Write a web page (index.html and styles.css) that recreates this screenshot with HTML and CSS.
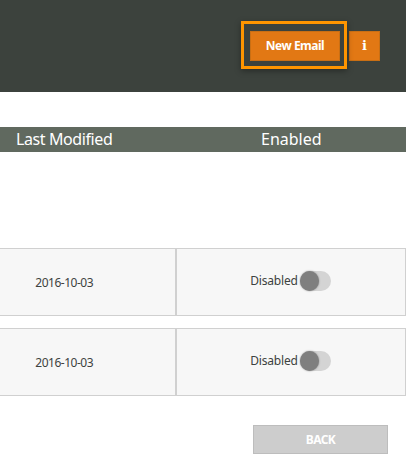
FILE: index.html
```html
<!DOCTYPE html>
<html lang="en">
<head>
<meta charset="utf-8">
<title>Emails</title>
<link rel="stylesheet" href="styles.css">
</head>
<body>
<header class="topbar">
  <button class="btn btn-new" type="button">New Email<span class="highlight"></span></button>
  <button class="btn btn-info" type="button">i</button>
</header>
<div class="table-head">
  <div class="col-date">Last Modified</div>
  <div class="col-enabled">Enabled</div>
</div>
<div class="rows">
  <div class="row">
    <div class="cell cell-date">2016-10-03</div>
    <div class="cell cell-state"><span class="state-label">Disabled</span><span class="toggle"><span class="knob"></span></span></div>
  </div>
  <div class="row">
    <div class="cell cell-date">2016-10-03</div>
    <div class="cell cell-state"><span class="state-label">Disabled</span><span class="toggle"><span class="knob"></span></span></div>
  </div>
</div>
<div class="footer">
  <button class="btn-back" type="button">BACK</button>
</div>
</body>
</html>
```
FILE: styles.css
```css
* { box-sizing: border-box; }
html, body { margin: 0; padding: 0; }
body {
  width: 406px;
  height: 468px;
  overflow: hidden;
  background: #fff;
  font-family: "Noto Sans", "Open Sans", sans-serif;
  color: #3d4240;
}
.topbar {
  height: 92px;
  background: #3c423d;
  display: flex;
  justify-content: flex-end;
  align-items: flex-start;
  gap: 9px;
  padding: 31px 26px 0 0;
}
.btn {
  height: 30px;
  border: 1px solid #c96f14;
  background: #e27814;
  color: #fff;
  font: 700 12px "Noto Sans", sans-serif;
  letter-spacing: -0.5px;
  padding: 0 0 2px;
}
.btn-new { width: 90px; position: relative; }
.btn-info { width: 31px; font: 700 13px "DejaVu Serif", serif; padding: 0 0 1px; letter-spacing: 0; }
.highlight {
  position: absolute;
  left: -10px;
  top: -11px;
  width: 106px;
  height: 48px;
  border: 3px solid #ff9500;
  box-shadow: 0 2px 6px rgba(0, 0, 0, 0.35);
}
.table-head {
  margin-top: 35px;
  height: 25px;
  background: #60695f;
  color: #fff;
  font-size: 16px;
  line-height: 25px;
  display: flex;
}
.col-date { width: 177px; padding-left: 16px; letter-spacing: -0.4px; }
.col-enabled { flex: 1; padding-left: 84px; }
.rows {
  margin-top: 96px;
  display: flex;
  flex-direction: column;
  gap: 12px;
}
.row {
  height: 68px;
  display: flex;
  width: 406px;
  border: 1px solid #d0d0d0;
  border-left: 0;
  background: #f7f7f7;
  font-size: 12px;
}
.cell { display: flex; align-items: center; justify-content: center; }
.cell-date { width: 175px; justify-content: flex-end; padding-right: 82px; letter-spacing: -0.5px; }
.cell-state { flex: 1; border-left: 2px solid #d0d0d0; gap: 2px; padding: 0 1px 2px 0; }
.state-label { margin-top: -2px; letter-spacing: -0.2px; }
.toggle {
  width: 31px;
  height: 20px;
  border-radius: 10px;
  background: #d4d4d4;
  position: relative;
  display: block;
}
.knob {
  position: absolute;
  left: 0;
  top: 0;
  width: 19px;
  height: 20px;
  border-radius: 50%;
  background: #7f7f7f;
  box-shadow: 0 0 2px rgba(0, 0, 0, 0.4);
}
.footer {
  display: flex;
  justify-content: flex-end;
  padding: 29px 18px 0 0;
}
.btn-back {
  width: 135px;
  height: 29px;
  background: #cdcdcd;
  border: 1px solid #bdbdbd;
  color: #fff;
  font: 700 12px "Noto Sans", sans-serif;
  letter-spacing: -0.6px;
  padding: 0;
}
```
